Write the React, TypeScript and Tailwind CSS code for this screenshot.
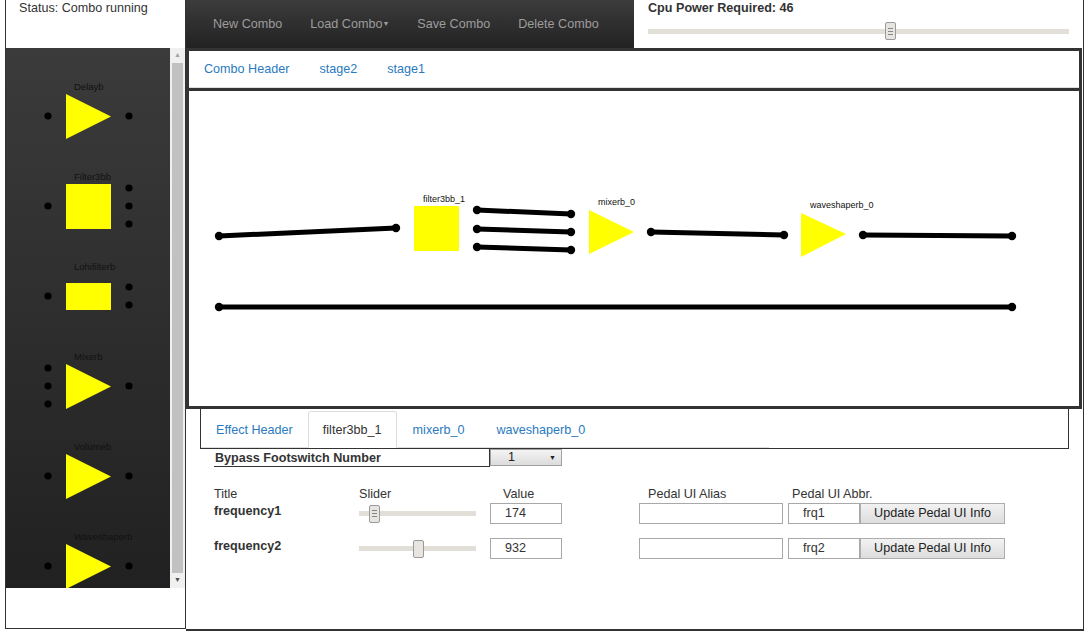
import React from "react";

const font = "font-['Liberation_Sans',Arial,sans-serif]";

type Palette = {
  name: string;
  shape: "tri" | "square" | "rect";
  left: number[];
  right: number[];
};

const palette: Palette[] = [
  { name: "Delayb", shape: "tri", left: [38], right: [38] },
  { name: "Filter3bb", shape: "square", left: [38], right: [20, 38, 56] },
  { name: "Lohifilterb", shape: "rect", left: [38], right: [29, 47] },
  { name: "Mixerb", shape: "tri", left: [20, 38, 56], right: [38] },
  { name: "Volumeb", shape: "tri", left: [38], right: [38] },
  { name: "Waveshaperb", shape: "tri", left: [38], right: [38] },
];

function PaletteItem({ item }: { item: Palette }) {
  return (
    <svg width="164" height="90" className="block shrink-0">
      <text x="68" y="12" fontSize="9.5" fill="#111" fontFamily="Liberation Sans, Arial, sans-serif">
        {item.name}
      </text>
      {item.shape === "tri" && <polygon points="60,16 105,38.5 60,61" fill="#ffff00" />}
      {item.shape === "square" && <rect x="60" y="16" width="45" height="45" fill="#ffff00" />}
      {item.shape === "rect" && <rect x="60" y="25" width="45" height="27" fill="#ffff00" />}
      {item.left.map((y) => (
        <circle key={"l" + y} cx="42" cy={y} r="3.6" fill="#000" />
      ))}
      {item.right.map((y) => (
        <circle key={"r" + y} cx="123" cy={y} r="3.6" fill="#000" />
      ))}
    </svg>
  );
}

function Wire({ x1, y1, x2, y2 }: { x1: number; y1: number; x2: number; y2: number }) {
  return (
    <g>
      <line x1={x1} y1={y1} x2={x2} y2={y2} stroke="#000" strokeWidth="5" />
      <circle cx={x1} cy={y1} r="4.2" fill="#000" />
      <circle cx={x2} cy={y2} r="4.2" fill="#000" />
    </g>
  );
}

// canvas inner origin is page (189, 91)
function ComboCanvas() {
  const ox = 189;
  const oy = 91;
  const w = (x1: number, y1: number, x2: number, y2: number) => (
    <Wire x1={x1 - ox} y1={y1 - oy} x2={x2 - ox} y2={y2 - oy} />
  );
  const lbl = { fontSize: 9, fill: "#111", fontFamily: "Liberation Sans, Arial, sans-serif" };
  return (
    <svg width="890" height="315" className="block">
      {w(219, 236, 396, 228)}
      <rect x={414 - ox} y={206 - oy} width="45" height="45" fill="#ffff00" />
      <text x={423 - ox} y={202 - oy} {...lbl}>filter3bb_1</text>
      {w(477, 210, 571, 214)}
      {w(477, 229, 571, 232)}
      {w(477, 247, 571, 250)}
      <polygon points={`${589 - ox},${210 - oy} ${634 - ox},${232 - oy} ${589 - ox},${254 - oy}`} fill="#ffff00" />
      <text x={598 - ox} y={205 - oy} {...lbl}>mixerb_0</text>
      {w(651, 232, 784, 235)}
      <polygon points={`${801 - ox},${213 - oy} ${846 - ox},${234 - oy} ${801 - ox},${257 - oy}`} fill="#ffff00" />
      <text x={810 - ox} y={208 - oy} {...lbl}>waveshaperb_0</text>
      {w(863, 235, 1012, 236)}
      {w(219, 307, 1012, 307)}
    </svg>
  );
}

function Thumb({ grip }: { grip?: boolean }) {
  return (
    <div className="w-[11px] h-[18px] border border-[#9a9a9a] bg-[#e8e5e1] rounded-[2px] flex flex-col items-center justify-center gap-[2px]">
      {grip && (
        <>
          <div className="w-[5px] h-px bg-[#888]" />
          <div className="w-[5px] h-px bg-[#888]" />
          <div className="w-[5px] h-px bg-[#888]" />
        </>
      )}
    </div>
  );
}

function Slider({ width, pos, grip }: { width: number; pos: number; grip?: boolean }) {
  return (
    <div className="relative h-[18px] flex items-center" style={{ width }}>
      <div className="w-full h-[5px] bg-[#e2ded8]" />
      <div className="absolute top-0" style={{ left: pos }}>
        <Thumb grip={grip} />
      </div>
    </div>
  );
}

function ParamRow({ name, value, abbr, pos, grip }: { name: string; value: string; abbr: string; pos: number; grip?: boolean }) {
  return (
    <div className="flex items-center h-[21px]">
      <div className="w-[145px] font-bold -mt-[4px]">{name}</div>
      <div className="w-[131px]">
        <Slider width={117} pos={pos} grip={grip} />
      </div>
      <div className="w-[149px]">
        <div className="w-[72px] h-[21px] border border-[#a9a9a9] pl-[14px] leading-[19px]">{value}</div>
      </div>
      <div className="w-[149px]">
        <div className="w-[144px] h-[21px] border border-[#a9a9a9]" />
      </div>
      <div className="w-[72px] h-[21px] border border-[#a9a9a9] pl-[14px] leading-[19px]">{abbr}</div>
      <button className="w-[145px] h-[21px] border border-[#adadad] bg-gradient-to-b from-[#f2f2f2] to-[#dddddd] text-[#222] leading-[19px]">
        Update Pedal UI Info
      </button>
    </div>
  );
}

export default function App() {
  return (
    <div className={`flex w-[1086px] h-[631px] bg-white overflow-hidden text-[12.6px] text-[#333] ${font}`}>
      {/* left column */}
      <div className="ml-[5px] w-[181px] h-[629px] flex flex-col border-x border-b border-[#333]">
        <div className="h-[48px] pl-[13px] pt-[1px] leading-[15px]">Status: Combo running</div>
        <div className="h-[540px] flex bg-gradient-to-b from-[#3b3b3b] to-[#212121]">
          <div className="w-[164px] overflow-hidden pt-[30px] flex flex-col">
            {palette.map((p) => (
              <PaletteItem key={p.name} item={p} />
            ))}
          </div>
          <div className="w-[15px] bg-[#f0f0f0] flex flex-col">
            <div className="h-[15px] flex items-center justify-center text-[#a3a3a3] text-[7px]">▲</div>
            <div className="flex-1 mx-[2px] bg-[#c1c1c1]" />
            <div className="h-[15px] flex items-center justify-center text-[#505050] text-[7px]">▼</div>
          </div>
        </div>
        <div className="flex-1" />
      </div>

      {/* right column */}
      <div className="w-[898px] h-[631px] flex flex-col border-r border-[#333]">
        <div className="h-[48px] flex">
          <div className="w-[448px] bg-gradient-to-b from-[#3c3c3c] to-[#222222] flex items-center pl-[13px] text-[#9d9d9d]">
            <span className="px-[14px]">New Combo</span>
            <span className="px-[14px]">
              Load Combo<span className="text-[7px] align-middle">▼</span>
            </span>
            <span className="px-[14px]">Save Combo</span>
            <span className="px-[14px]">Delete Combo</span>
          </div>
          <div className="flex-1 pl-[14px] pr-[14px]">
            <div className="font-bold leading-[15px] pt-[1px]">Cpu Power Required: 46</div>
            <div className="mt-[6px]">
              <Slider width={421} pos={237} grip />
            </div>
          </div>
        </div>

        <div className="mr-[1px] h-[40px] border-t-[3px] border-x-[3px] border-[#333]">
          <div className="h-[37px] border-b border-[#dddddd] flex items-center text-[#2a7ac0]">
            <span className="px-[15px]">Combo Header</span>
            <span className="px-[15px]">stage2</span>
            <span className="px-[15px]">stage1</span>
          </div>
        </div>

        <div className="mr-[1px] h-[321px] border-[3px] border-[#333]">
          <ComboCanvas />
        </div>

        <div className="flex-1 border-b-2 border-[#333] pl-[14px]">
          <div className="w-[869px] h-[40px] border-x border-b border-[#333]">
            <div className="w-[568px] h-[39px] pt-[2px] flex items-end border-b border-[#dddddd]">
              <span className="px-[14px] h-[36px] leading-[36px] border border-transparent text-[#2a7ac0]">Effect Header</span>
              <span className="px-[14px] h-[37px] leading-[36px] border border-[#dddddd] border-b-white bg-white rounded-t-[3px] -mb-px">
                filter3bb_1
              </span>
              <span className="px-[15px] h-[36px] leading-[36px] border border-transparent text-[#2a7ac0]">mixerb_0</span>
              <span className="px-[15px] h-[36px] leading-[36px] border border-transparent text-[#2a7ac0]">waveshaperb_0</span>
            </div>
          </div>

          <div className="pl-[14px] flex">
            <div className="w-[276px] h-[18px] border-r border-b border-[#333] pl-[1px] pt-[1px] font-bold leading-[17px]">
              Bypass Footswitch Number
            </div>
            <div className="w-[72px] h-[17px] border border-[#a0a0a0] bg-gradient-to-b from-[#f4f4f4] to-[#dcdcdc] flex items-center pl-[17px] pr-[5px] text-[#222] leading-[15px]">
              <span className="flex-1">1</span>
              <span className="text-[7px]">▼</span>
            </div>
          </div>

          <div className="pl-[14px] mt-[20px] flex leading-[15px]">
            <div className="w-[145px]">Title</div>
            <div className="w-[144px]">Slider</div>
            <div className="w-[145px]">Value</div>
            <div className="w-[144px]">Pedal UI Alias</div>
            <div>Pedal UI Abbr.</div>
          </div>

          <div className="pl-[14px] mt-[1px] flex flex-col gap-[14px]">
            <ParamRow name="frequency1" value="174" abbr="frq1" pos={10} grip />
            <ParamRow name="frequency2" value="932" abbr="frq2" pos={54} />
          </div>
        </div>
      </div>
    </div>
  );
}
